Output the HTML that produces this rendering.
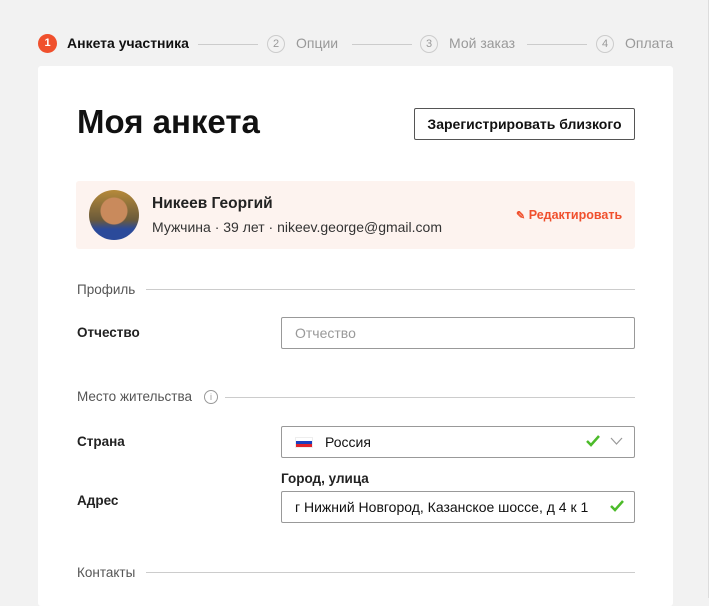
<!DOCTYPE html>
<html><head><meta charset="utf-8"><style>
*{box-sizing:border-box;margin:0;padding:0}
body{width:709px;height:598px;overflow:hidden;background:#f2f2f2;font-family:"Liberation Sans",sans-serif;color:#111;position:relative;border-right:1px solid #ddd}
.a{position:absolute}
.step{font-size:14px;color:#999;top:35px}
.num{width:18px;height:18px;border-radius:50%;border:1px solid #ccc;font-size:11px;color:#999;text-align:center;line-height:16px;top:35px}
.line{height:1px;background:#ccc;top:44px}
.card{left:38px;top:66px;width:635px;height:540px;background:#fff;border-radius:3px}
.lbl{font-size:13.5px;font-weight:bold;color:#222}
.sec{font-size:13.5px;color:#555}
.hr{height:1px;background:#ccc}
.inp{border:1px solid #999;border-radius:2px;height:32px;width:354px;left:281px;font-size:14px;padding-left:13px;line-height:30px}
</style></head><body>
<div class="a" style="left:38px;top:34px;width:19px;height:19px;border-radius:50%;background:#f0502d;color:#fff;font-size:11px;font-weight:bold;text-align:center;line-height:19px">1</div>
<div class="a step" style="left:67px;color:#111;font-weight:bold;font-size:14px">Анкета участника</div>
<div class="a line" style="left:198px;width:60px"></div>
<div class="a num" style="left:267px">2</div>
<div class="a step" style="left:296px">Опции</div>
<div class="a line" style="left:352px;width:60px"></div>
<div class="a num" style="left:420px">3</div>
<div class="a step" style="left:449px">Мой заказ</div>
<div class="a line" style="left:527px;width:60px"></div>
<div class="a num" style="left:596px">4</div>
<div class="a step" style="left:625px">Оплата</div>

<div class="a card"></div>
<div class="a" style="left:77px;top:103px;font-size:33px;font-weight:bold">Моя анкета</div>
<div class="a" style="left:414px;top:108px;width:221px;height:32px;border:1px solid #555;border-radius:2px;font-size:14px;font-weight:bold;text-align:center;line-height:30px">Зарегистрировать близкого</div>

<div class="a" style="left:76px;top:181px;width:559px;height:68px;background:#fdf3ef;border-radius:3px"></div>
<div class="a" style="left:89px;top:190px;width:50px;height:50px;border-radius:50%;background:radial-gradient(circle at 50% 42%,#c98a5c 0 13px,transparent 14px),linear-gradient(#b68a3a 0,#6a5a3a 60%,#2b4a9a 78%,#2b4a9a 100%)"></div>
<div class="a" style="left:152px;top:195px;font-size:15.5px;font-weight:bold;color:#222">Никеев Георгий</div>
<div class="a" style="left:152px;top:219px;font-size:14px;color:#333">Мужчина · 39 лет · nikeev.george@gmail.com</div>
<div class="a" style="left:516px;top:208px;font-size:12.5px;font-weight:bold;color:#f0502d"><span style="font-size:11px">✎</span> Редактировать</div>

<div class="a sec" style="left:77px;top:282px">Профиль</div>
<div class="a hr" style="left:146px;top:289px;width:489px"></div>
<div class="a lbl" style="left:77px;top:325px">Отчество</div>
<div class="a inp" style="top:317px;color:#999">Отчество</div>

<div class="a sec" style="left:77px;top:389px">Место жительства</div>
<div class="a" style="left:204px;top:390px;width:14px;height:14px;border:1px solid #999;border-radius:50%;font-size:9px;color:#999;text-align:center;line-height:12px">i</div>
<div class="a hr" style="left:225px;top:397px;width:410px"></div>

<div class="a lbl" style="left:77px;top:434px">Страна</div>
<div class="a inp" style="top:426px"><span style="display:inline-block;width:18px;height:11px;vertical-align:-1px;background:linear-gradient(#fff 0 33%,#1a3fbf 33% 66%,#e0222a 66%);border:1px solid #eee;margin-right:12px"></span>Россия</div>
<svg class="a" style="left:585px;top:433px" width="16" height="16"><path d="M2 8l4 4 8-9" stroke="#4cbb2a" stroke-width="2.5" fill="none"/></svg>
<svg class="a" style="left:610px;top:436px" width="13" height="10"><path d="M1 2l5.5 6 5.5-6" stroke="#999" stroke-width="1.2" fill="none"/></svg>

<div class="a lbl" style="left:281px;top:471px">Город, улица</div>
<div class="a lbl" style="left:77px;top:493px">Адрес</div>
<div class="a inp" style="top:491px">г Нижний Новгород, Казанское шоссе, д 4 к 1</div>
<svg class="a" style="left:609px;top:498px" width="16" height="16"><path d="M2 8l4 4 8-9" stroke="#4cbb2a" stroke-width="2.5" fill="none"/></svg>

<div class="a sec" style="left:77px;top:565px">Контакты</div>
<div class="a hr" style="left:146px;top:572px;width:489px"></div>
</body></html>
